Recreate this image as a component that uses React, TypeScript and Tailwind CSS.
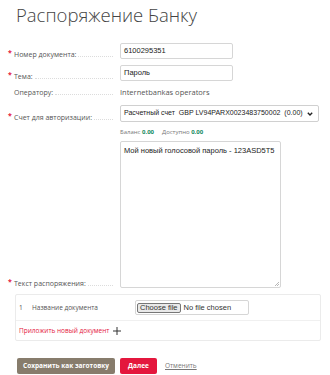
import React from 'react';

const sans = { fontFamily: '"Open Sans", "Liberation Sans", sans-serif' };
const arial = { fontFamily: '"Liberation Sans", Arial, sans-serif' };

function Label({ text, required = true }: { text: string; required?: boolean }) {
  return (
    <div className="relative flex w-[113px] shrink-0 items-end pl-[14px] text-[7px] text-[#555]">
      {required && <span className="absolute left-[8px] top-[-2px] text-[7px] font-bold text-[#e4173d]">*</span>}
      <span className="whitespace-nowrap leading-[9px]">{text}</span>
      <span className="mb-[2px] ml-[2px] flex-1 border-b border-dotted border-[#dcdcdc]" />
    </div>
  );
}

export default function App() {
  return (
    <div className="h-[375px] w-[330px] overflow-hidden bg-white" style={sans}>
      <h1 className="pl-[16px] pt-[3px] text-[18.5px] font-light leading-[24px] text-[#444]">
        Распоряжение Банку
      </h1>

      <div className="mt-[16px] flex flex-col">
        {/* Номер документа */}
        <div className="flex items-end gap-[7px]">
          <Label text="Номер документа:" />
          <div className="flex h-[16px] w-[113px] items-center rounded-[2px] border border-[#d6d6d6] px-[3px] text-[7.5px] text-[#222]" style={arial}>
            6100295351
          </div>
        </div>

        {/* Тема */}
        <div className="mt-[6px] flex items-end gap-[7px]">
          <Label text="Тема:" />
          <div className="flex h-[16px] w-[113px] items-center rounded-[2px] border border-[#d6d6d6] px-[3px] text-[7.5px] text-[#222]" style={arial}>
            Пароль
          </div>
        </div>

        {/* Оператору */}
        <div className="mt-[7px] flex items-end gap-[7px]">
          <Label text="Оператору:" required={false} />
          <span className="text-[7.5px] leading-[9px] text-[#555]">Internetbankas operators</span>
        </div>

        {/* Счет */}
        <div className="mt-[8px] flex items-end gap-[7px]">
          <Label text="Счет для авторизации:" />
          <div className="flex h-[17px] w-[199px] items-center justify-between rounded-[2px] border border-[#d0d0d0] pl-[3px] pr-[5px] text-[7px] text-[#222]" style={arial}>
            <span className="whitespace-pre">Расчетный счет  GBP LV94PARX0023483750002  (0.00)</span>
            <svg width="6" height="4" viewBox="0 0 6 4">
              <path d="M0.8 0.8 L3 3 L5.2 0.8" fill="none" stroke="#222" strokeWidth="1.4" />
            </svg>
          </div>
        </div>

        <div className="mt-[6px] pl-[120px] text-[6px] leading-[8px] text-[#777]">
          Баланс <b className="text-[#138a5e]">0.00</b>
          <span className="ml-[8px]">Доступно </span>
          <b className="text-[#138a5e]">0.00</b>
        </div>

        {/* Текст распоряжения */}
        <div className="mt-[5px] flex items-end gap-[7px]">
          <Label text="Текст распоряжения:" />
          <div className="relative h-[147px] w-[161px] rounded-[2px] border border-[#d6d6d6] px-[3px] pt-[3px] text-[7.5px] text-[#222]" style={arial}>
            Мой новый голосовой пароль - 123ASD5T5
            <svg className="absolute bottom-[1px] right-[1px]" width="5" height="5" viewBox="0 0 5 5">
              <path d="M1 5 L5 1 M3 5 L5 3" stroke="#999" strokeWidth="0.7" />
            </svg>
          </div>
        </div>
      </div>

      {/* Документы */}
      <div className="ml-[15px] mt-[6px] w-[306px] rounded-[2px] border border-[#ebebeb]">
        <div className="flex h-[26px] items-center border-b border-[#f0f0f0] pl-[3px] text-[6.5px] text-[#555]">
          <span className="w-[13px]">1</span>
          <span className="w-[103px]">Название документа</span>
          <div className="flex h-[15px] w-[114px] items-center rounded-[2px] border border-[#d6d6d6] pl-[1px] text-[7.5px] text-[#333]" style={arial}>
            <span className="rounded-[2px] border border-[#777] bg-[#e9e9e9] px-[2px] leading-[8px]">Choose file</span>
            <span className="ml-[3px]">No file chosen</span>
          </div>
        </div>
        <div className="flex h-[19px] items-center pl-[3px] text-[6.5px] text-[#e4173d]">
          Приложить новый документ
          <svg className="ml-[4px]" width="8" height="8" viewBox="0 0 8 8">
            <path d="M4 0 V8 M0 4 H8" stroke="#333" strokeWidth="1" />
          </svg>
        </div>
      </div>

      {/* Кнопки */}
      <div className="ml-[17px] mt-[17px] flex items-center">
        <button className="h-[16px] w-[98px] rounded-[2px] bg-[#877c6c] text-[6.5px] font-bold text-white">
          Сохранить как заготовку
        </button>
        <button className="ml-[5px] h-[16px] w-[37px] rounded-[2px] bg-[#e4173d] text-[6.5px] font-bold text-white">
          Далее
        </button>
        <a className="ml-[8px] text-[6.5px] text-[#777] underline">Отменить</a>
      </div>
    </div>
  );
}
